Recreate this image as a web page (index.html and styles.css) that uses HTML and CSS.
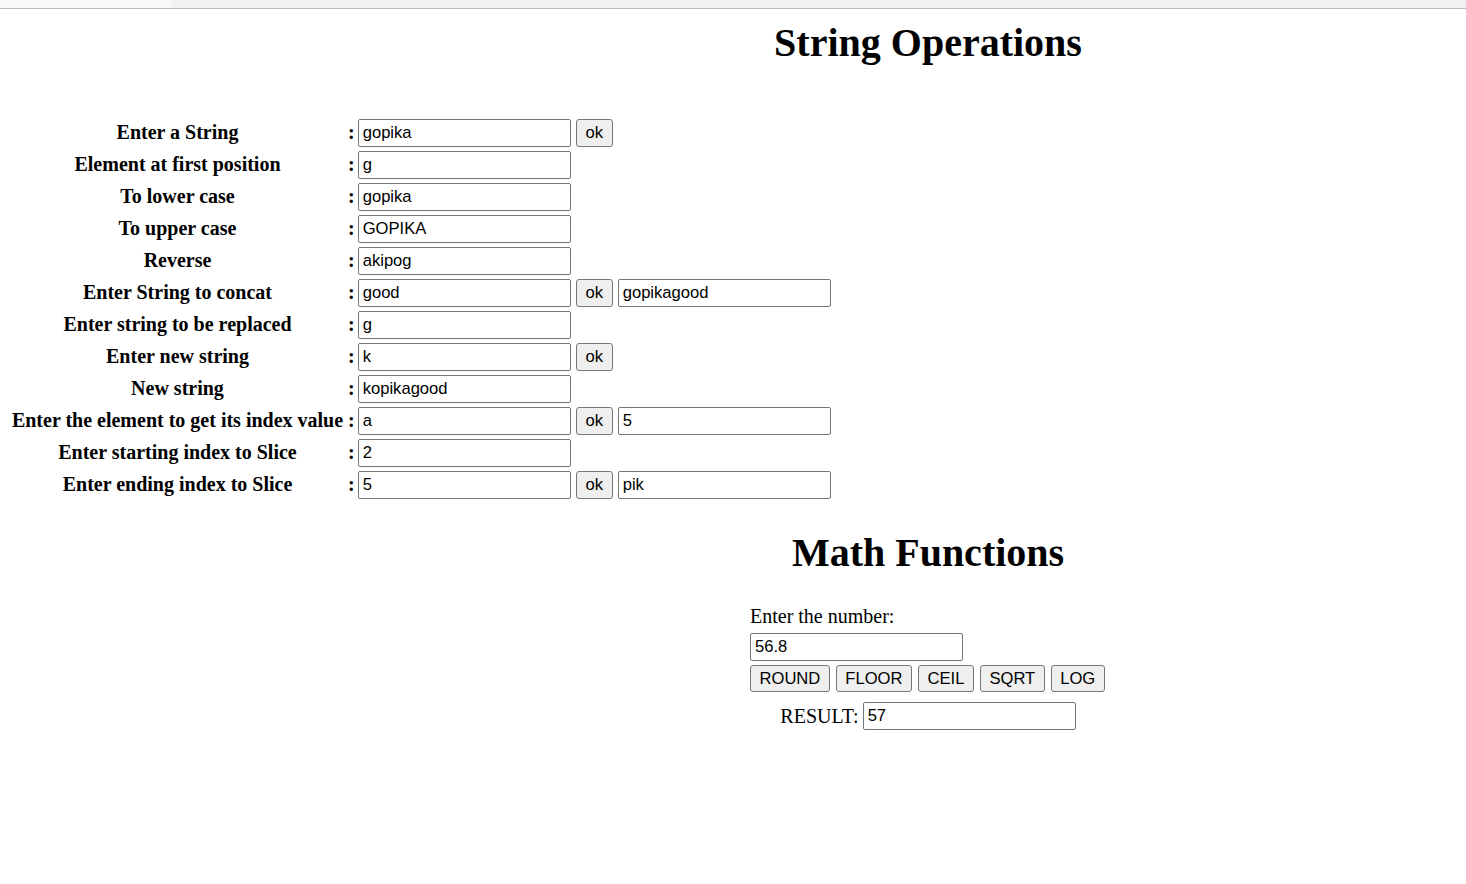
FILE: index.html
```html
<!DOCTYPE html>
<html>
<head>
<meta charset="utf-8">
<title>String Operations</title>
<link rel="stylesheet" href="styles.css">
</head>
<body>
<div class="topbar"><div class="tab"></div></div>
<div class="page">
  <div class="head-col">
    <h1 class="title">String Operations</h1>
  </div>
  <table class="ops">
    <tr><th>Enter a String</th><td class="colon">:</td><td><div class="ctrls"><input class="field" value="gopika"><button class="btn ok">ok</button></div></td></tr>
    <tr><th>Element at first position</th><td class="colon">:</td><td><div class="ctrls"><input class="field" value="g"></div></td></tr>
    <tr><th>To lower case</th><td class="colon">:</td><td><div class="ctrls"><input class="field" value="gopika"></div></td></tr>
    <tr><th>To upper case</th><td class="colon">:</td><td><div class="ctrls"><input class="field" value="GOPIKA"></div></td></tr>
    <tr><th>Reverse</th><td class="colon">:</td><td><div class="ctrls"><input class="field" value="akipog"></div></td></tr>
    <tr><th>Enter String to concat</th><td class="colon">:</td><td><div class="ctrls"><input class="field" value="good"><button class="btn ok">ok</button><input class="field" value="gopikagood"></div></td></tr>
    <tr><th>Enter string to be replaced</th><td class="colon">:</td><td><div class="ctrls"><input class="field" value="g"></div></td></tr>
    <tr><th>Enter new string</th><td class="colon">:</td><td><div class="ctrls"><input class="field" value="k"><button class="btn ok">ok</button></div></td></tr>
    <tr><th>New string</th><td class="colon">:</td><td><div class="ctrls"><input class="field" value="kopikagood"></div></td></tr>
    <tr><th>Enter the element to get its index value</th><td class="colon">:</td><td><div class="ctrls"><input class="field" value="a"><button class="btn ok">ok</button><input class="field" value="5"></div></td></tr>
    <tr><th>Enter starting index to Slice</th><td class="colon">:</td><td><div class="ctrls"><input class="field" value="2"></div></td></tr>
    <tr><th>Enter ending index to Slice</th><td class="colon">:</td><td><div class="ctrls"><input class="field" value="5"><button class="btn ok">ok</button><input class="field" value="pik"></div></td></tr>
  </table>
  <div class="math">
    <h1 class="title math-title">Math Functions</h1>
    <div class="num-label">Enter the number:</div>
    <input class="field num-field" value="56.8">
    <div class="btn-row">
      <button class="btn">ROUND</button>
      <button class="btn">FLOOR</button>
      <button class="btn">CEIL</button>
      <button class="btn">SQRT</button>
      <button class="btn">LOG</button>
    </div>
    <div class="result-row">
      <span class="result-label">RESULT:</span>
      <input class="field" value="57">
    </div>
  </div>
</div>
</body>
</html>
```
FILE: styles.css
```css
html, body {
  margin: 0;
  padding: 0;
  background: #ffffff;
  color: #000000;
  font-family: "Liberation Serif", "Times New Roman", serif;
}

.topbar {
  height: 8px;
  background: #f1f1f1;
  border-bottom: 1px solid #b9b9b9;
  display: flex;
}

.topbar .tab {
  width: 172px;
  background: #f8f8f8;
}

.page {
  padding: 0 0 0 8px;
}

.head-col {
  margin-left: 742px;
  width: 356px;
}

.title {
  margin: 0;
  font-size: 40px;
  line-height: 46px;
  font-weight: bold;
  text-align: center;
  white-space: nowrap;
}

.head-col .title {
  padding-top: 10.5px;
}

.ops {
  margin-top: 50px;
  border-collapse: separate;
  border-spacing: 2px;
}

.ops th {
  width: 333px;
  padding: 1px;
  font-size: 20px;
  font-weight: bold;
  text-align: center;
  white-space: nowrap;
}

.ops td {
  padding: 1px 0;
}

.ops td.colon {
  padding: 1px;
  font-size: 20px;
  font-weight: bold;
}

.ctrls {
  display: flex;
  gap: 5px;
  align-items: center;
}

.field {
  box-sizing: border-box;
  width: 213px;
  height: 28px;
  margin: 0;
  padding: 0 4px;
  border: 1px solid #767676;
  border-radius: 2px;
  background: #ffffff;
  color: #000000;
  font-family: "Liberation Sans", Arial, sans-serif;
  font-size: 16.6px;
}

.btn {
  box-sizing: border-box;
  height: 28px;
  margin: 0;
  padding: 0 8.5px;
  border: 1px solid #767676;
  border-radius: 3px;
  background: #efefef;
  color: #000000;
  font-family: "Liberation Sans", Arial, sans-serif;
  font-size: 16.6px;
}

.btn.ok {
  width: 37px;
  padding: 0;
}

.math {
  margin-left: 742px;
  width: 356px;
}

.math-title {
  margin-top: 28px;
}

.num-label {
  margin-top: 29.5px;
  font-size: 20px;
  line-height: 23px;
}

.num-field {
  display: block;
  margin-top: 5px;
}

.btn-row {
  display: flex;
  gap: 6px;
  margin-top: 4px;
}

.btn-row .btn {
  height: 27px;
}

.result-row {
  display: flex;
  justify-content: center;
  align-items: center;
  gap: 4px;
  margin-top: 10px;
}

.result-label {
  font-size: 20px;
  line-height: 23px;
}
```
